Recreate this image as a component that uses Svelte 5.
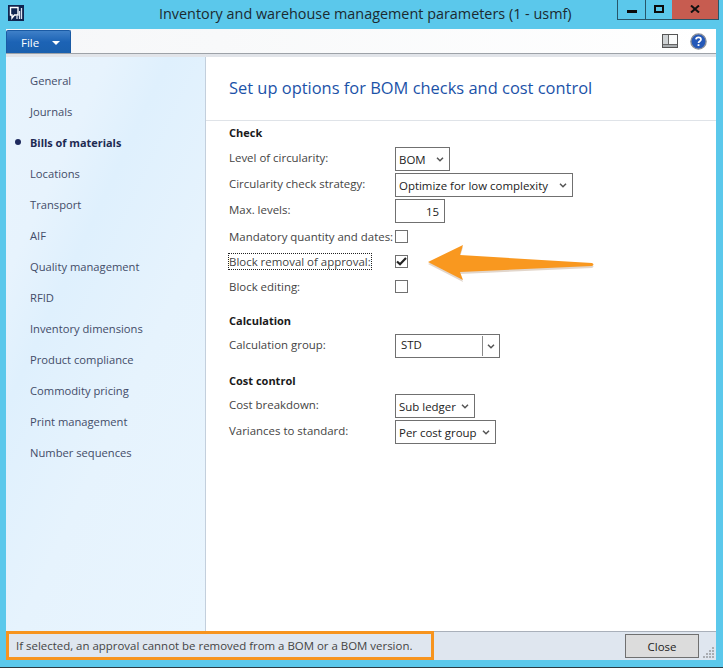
<script lang="ts">
  const navItems = [
    "General",
    "Journals",
    "Bills of materials",
    "Locations",
    "Transport",
    "AIF",
    "Quality management",
    "RFID",
    "Inventory dimensions",
    "Product compliance",
    "Commodity pricing",
    "Print management",
    "Number sequences",
  ];
  const activeNav = "Bills of materials";
</script>

{#snippet chevron()}
  <svg class="chevron" width="8" height="5" viewBox="0 0 8 5">
    <path d="M1 0.8 L4 3.8 L7 0.8" fill="none" stroke="#555" stroke-width="1.5" />
  </svg>
{/snippet}

<div class="window">
  <header class="titlebar">
    <svg class="logo" width="16" height="16" viewBox="0 0 16 16">
      <rect width="16" height="16" fill="#10254f" />
      <path d="M2.5 2.500 H10 V10 H6.500 L4 13 V10 H2.500 Z" fill="none" stroke="#fff" stroke-width="1.400" />
      <path d="M11.500 6 V14 M13.500 3 V14 M9 11 V14" stroke="#dbe3ee" stroke-width="1.300" />
    </svg>
    <div class="title">Inventory and warehouse management parameters (1 - usmf)</div>
    <div class="caption">
      <div class="cap-btn min"><span class="min-bar"></span></div>
      <div class="cap-btn max"><span class="max-box"></span></div>
      <div class="cap-btn close-x">
        <svg width="10" height="8" viewBox="0 0 10 8">
          <path d="M1 0.5 L9 7.5 M9 0.5 L1 7.5" stroke="#111" stroke-width="2" />
        </svg>
      </div>
    </div>
  </header>

  <div class="frame">
    <div class="menubar">
      <div class="file-tab">File <span class="file-caret"></span></div>
      <div class="menu-icons">
        <svg width="16" height="14" viewBox="0 0 16 14">
          <rect x="0.5" y="0.5" width="15" height="13" fill="#fafbfb" stroke="#555" />
          <rect x="1" y="1" width="5" height="9" fill="#cfd3d5" />
          <rect x="1" y="10" width="14" height="3" fill="#a9adb0" />
          <path d="M6.500 1 V10 M1 10.500 H15" stroke="#666" />
        </svg>
        <svg width="17" height="17" viewBox="0 0 17 17">
          <circle cx="8.5" cy="8.5" r="7.6" fill="#2458b8" stroke="#8b8f98" stroke-width="1.4" />
          <path d="M6 6.4 C6.2 3.6 11 3.6 11 6.4 C11 8.2 8.5 8.2 8.5 10" fill="none" stroke="#fff" stroke-width="1.7" />
          <rect x="7.6" y="11.2" width="1.8" height="1.8" fill="#fff" />
        </svg>
      </div>
    </div>
    <div class="menu-shadow"></div>

    <div class="body">
      <nav class="nav">
        {#each navItems as item}
          <div class="nav-item" class:active={item === activeNav}>{item}</div>
        {/each}
      </nav>

      <main class="content">
        <h1 class="page-title">Set up options for BOM checks and cost control</h1>

        <section class="form">
          <h2>Check</h2>
          <div class="row">
            <span class="label">Level of circularity:</span>
            <div class="select w-55">BOM {@render chevron()}</div>
          </div>
          <div class="row">
            <span class="label">Circularity check strategy:</span>
            <div class="select w-178">Optimize for low complexity {@render chevron()}</div>
          </div>
          <div class="row max-row">
            <span class="label">Max. levels:</span>
            <div class="number">15</div>
          </div>
          <div class="row check-row">
            <span class="label">Mandatory quantity and dates:</span>
            <div class="checkbox"></div>
          </div>
          <div class="row check-row">
            <span class="label"><span class="focused">Block removal of approval:</span></span>
            <div class="checkbox">
              <svg width="11" height="9" viewBox="0 0 11 9">
                <path d="M1 4.5 L4 7.2 L10 1" fill="none" stroke="#222" stroke-width="2.2" />
              </svg>
            </div>
          </div>
          <div class="row check-row">
            <span class="label">Block editing:</span>
            <div class="checkbox"></div>
          </div>

          <h2 class="calc">Calculation</h2>
          <div class="row">
            <span class="label">Calculation group:</span>
            <div class="combo">
              <span class="combo-value">STD</span>
              <span class="combo-btn">{@render chevron()}</span>
            </div>
          </div>

          <h2 class="cost">Cost control</h2>
          <div class="row">
            <span class="label">Cost breakdown:</span>
            <div class="select w-80">Sub ledger {@render chevron()}</div>
          </div>
          <div class="row">
            <span class="label">Variances to standard:</span>
            <div class="select w-101">Per cost group {@render chevron()}</div>
          </div>
        </section>
      </main>
    </div>

    <footer class="statusbar">
      <div class="help-text">If selected, an approval cannot be removed from a BOM or a BOM version.</div>
      <button type="button" class="close-btn">Close</button>
      <svg class="grip" width="12" height="12" viewBox="0 0 12 12" fill="#a9adb2">
        <rect x="9" y="0" width="2" height="2" />
        <rect x="6" y="3" width="2" height="2" /><rect x="9" y="3" width="2" height="2" />
        <rect x="3" y="6" width="2" height="2" /><rect x="6" y="6" width="2" height="2" /><rect x="9" y="6" width="2" height="2" />
        <rect x="0" y="9" width="2" height="2" /><rect x="3" y="9" width="2" height="2" /><rect x="6" y="9" width="2" height="2" /><rect x="9" y="9" width="2" height="2" />
      </svg>
    </footer>
  </div>

  <!-- annotation arrow laid over the form -->
  <svg class="arrow" width="723" height="668" viewBox="0 0 723 668">
    <path d="M428 262 L463 245 L460 255 L592 263 Q595 264.500 592 266 L460 272 L463 280 Z" fill="#ac8a6a" opacity="0.35" transform="translate(0 2)" />
    <path d="M428 262 L463 245 L460 255 L592 263 Q595 264.500 592 266 L460 272 L463 280 Z" fill="#f9981f" />
  </svg>
</div>

<style>
  :global(body) {
    margin: 0;
  }

  .window {
    position: relative;
    width: 723px;
    height: 668px;
    background: #5bc8eb;
    border-bottom: 1px solid #2b3a42;
    box-sizing: border-box;
    display: flex;
    flex-direction: column;
    overflow: hidden;
    font-family: "Open Sans", "Noto Sans", sans-serif;
    font-size: 11.45px;
    color: #444;
  }

  .titlebar {
    position: relative;
    height: 29px;
    flex-shrink: 0;
  }

  .logo {
    position: absolute;
    left: 8px;
    top: 5px;
  }

  .title {
    position: absolute;
    left: 159px;
    top: 3px;
    width: 405px;
    text-align: center;
    white-space: nowrap;
    font-size: 14.4px;
    line-height: 22px;
    color: #1c2a30;
  }

  .caption {
    position: absolute;
    left: 617px;
    top: 0;
    display: flex;
    height: 20px;
    width: 102px;
    border: 1px solid #27566a;
    border-top: none;
    box-sizing: border-box;
  }

  .cap-btn {
    display: flex;
    align-items: center;
    justify-content: center;
    height: 100%;
  }

  .min {
    width: 27px;
    border-right: 1px solid #27566a;
  }

  .min-bar {
    width: 10px;
    height: 3px;
    margin-top: 3px;
    background: #0b0b0b;
  }

  .max {
    width: 26px;
  }

  .max-box {
    width: 6px;
    height: 4px;
    border: 2px solid #0b0b0b;
    margin-bottom: 2px;
  }

  .close-x {
    flex: 1;
    background: #c75c50;
    padding-bottom: 2px;
    box-sizing: border-box;
  }

  .frame {
    flex: 1;
    margin: 0 7px 7px 6px;
    min-height: 0;
    display: flex;
    flex-direction: column;
    background: #fff;
  }

  .menubar {
    height: 25px;
    flex-shrink: 0;
    display: flex;
    justify-content: space-between;
    align-items: stretch;
    background: linear-gradient(90deg, #f6f7f9 0%, #f8f9fa 30%, #fff 100%);
    border-bottom: 1px solid #9da2a8;
    box-sizing: border-box;
  }

  .file-tab {
    width: 65px;
    margin-top: 1px;
    box-sizing: border-box;
    background: linear-gradient(180deg, #3f80c8 0%, #1c63b5 50%, #1a60ae 100%);
    border: 1px solid #1a5aa4;
    border-bottom: none;
    border-radius: 2px 2px 0 0;
    color: #fff;
    display: flex;
    align-items: center;
    padding-left: 14px;
    font-size: 11.5px;
    gap: 13px;
  }

  .file-caret {
    width: 0;
    height: 0;
    margin-top: 2px;
    border-left: 4px solid transparent;
    border-right: 4px solid transparent;
    border-top: 4px solid #fff;
  }

  .menu-icons {
    display: flex;
    align-items: center;
    gap: 12px;
    padding-right: 9px;
  }

  .menu-shadow {
    height: 3px;
    flex-shrink: 0;
    background: #e1e4e9;
  }

  .body {
    flex: 1;
    display: flex;
    min-height: 0;
  }

  .nav {
    width: 200px;
    flex-shrink: 0;
    padding-top: 8px;
    box-sizing: border-box;
    border-right: 1px solid #c3cfdc;
    background: linear-gradient(115deg, #e9f4fd 0%, #e7f3fd 22%, #dff0fd 35%, #e6f3fd 60%, #e9f5fe 100%);
  }

  .nav-item {
    position: relative;
    height: 31px;
    line-height: 31px;
    padding-left: 24px;
    font-size: 11.2px;
    color: #434c68;
    white-space: nowrap;
  }

  .nav-item.active {
    font-size: 10.9px;
    font-weight: 700;
    color: #1e2a52;
  }

  .nav-item.active::before {
    content: "";
    position: absolute;
    left: 9px;
    top: 12px;
    width: 6px;
    height: 6px;
    border-radius: 50%;
    background: #1e2a5e;
  }

  .content {
    flex: 1;
    min-width: 0;
  }

  .page-title {
    margin: 0;
    height: 64px;
    padding: 20px 0 0 23px;
    box-sizing: border-box;
    border-bottom: 1px solid #dfe3e8;
    font-size: 16.45px;
    line-height: 22px;
    font-weight: 400;
    color: #1b52a8;
    white-space: nowrap;
  }

  .form {
    padding: 4px 0 0 23px;
  }

  h2 {
    margin: 0;
    height: 22px;
    line-height: 16px;
    font-size: 11px;
    font-weight: 700;
    color: #1a1a1a;
  }

  h2.calc {
    margin-top: 14px;
    height: 21px;
  }

  h2.cost {
    margin-top: 15px;
    height: 21px;
  }

  .row {
    display: flex;
    align-items: center;
    height: 24px;
    margin-bottom: 2px;
  }

  .row.max-row {
    margin-bottom: 1px;
  }

  .row > .label {
    width: 166px;
    flex-shrink: 0;
    white-space: nowrap;
    margin-top: -3px;
  }

  .row.check-row {
    height: 25px;
    margin-bottom: 0;
  }

  .row.check-row > .label {
    margin-top: 0;
  }

  .focused {
    outline: 1px dotted #222;
    outline-offset: 0;
  }

  .select,
  .number,
  .combo {
    height: 24px;
    box-sizing: border-box;
    border: 1px solid #707070;
    background: #fff;
    color: #222;
    display: flex;
    align-items: center;
  }

  .select {
    justify-content: space-between;
    padding: 0 5px 0 3px;
    white-space: nowrap;
  }

  .w-55 {
    width: 55px;
  }

  .w-178 {
    width: 178px;
  }

  .w-80 {
    width: 80px;
  }

  .w-101 {
    width: 101px;
  }

  .number {
    width: 50px;
    justify-content: flex-end;
    padding-right: 5px;
  }

  .combo {
    width: 105px;
  }

  .combo-value {
    flex: 1;
    padding-left: 5px;
    margin-top: -3px;
  }

  .combo-btn {
    width: 16px;
    height: 20px;
    border-left: 1px solid #8a8a8a;
    display: flex;
    align-items: center;
    justify-content: center;
  }

  .checkbox {
    width: 13px;
    height: 13px;
    border: 1px solid #707070;
    box-sizing: border-box;
    background: #fff;
    display: flex;
    align-items: center;
    justify-content: center;
  }

  .statusbar {
    position: relative;
    height: 29px;
    flex-shrink: 0;
    display: flex;
    align-items: center;
    justify-content: space-between;
    background: #dfe6ef;
    border-top: 1px solid #a9b0ba;
    box-sizing: border-box;
  }

  .help-text {
    width: 428px;
    height: 29px;
    margin-top: -1px;
    box-sizing: border-box;
    border: 3px solid #f7941e;
    padding-left: 7px;
    line-height: 23px;
    color: #444;
    white-space: nowrap;
  }

  .close-btn {
    width: 74px;
    height: 24px;
    margin-right: 17px;
    border: 1px solid #707070;
    background: #dcdcdc;
    color: #222;
    font: inherit;
    padding: 0;
  }

  .grip {
    position: absolute;
    right: 1px;
    bottom: 1px;
  }

  .arrow {
    position: absolute;
    left: 0;
    top: 0;
    pointer-events: none;
  }
</style>
